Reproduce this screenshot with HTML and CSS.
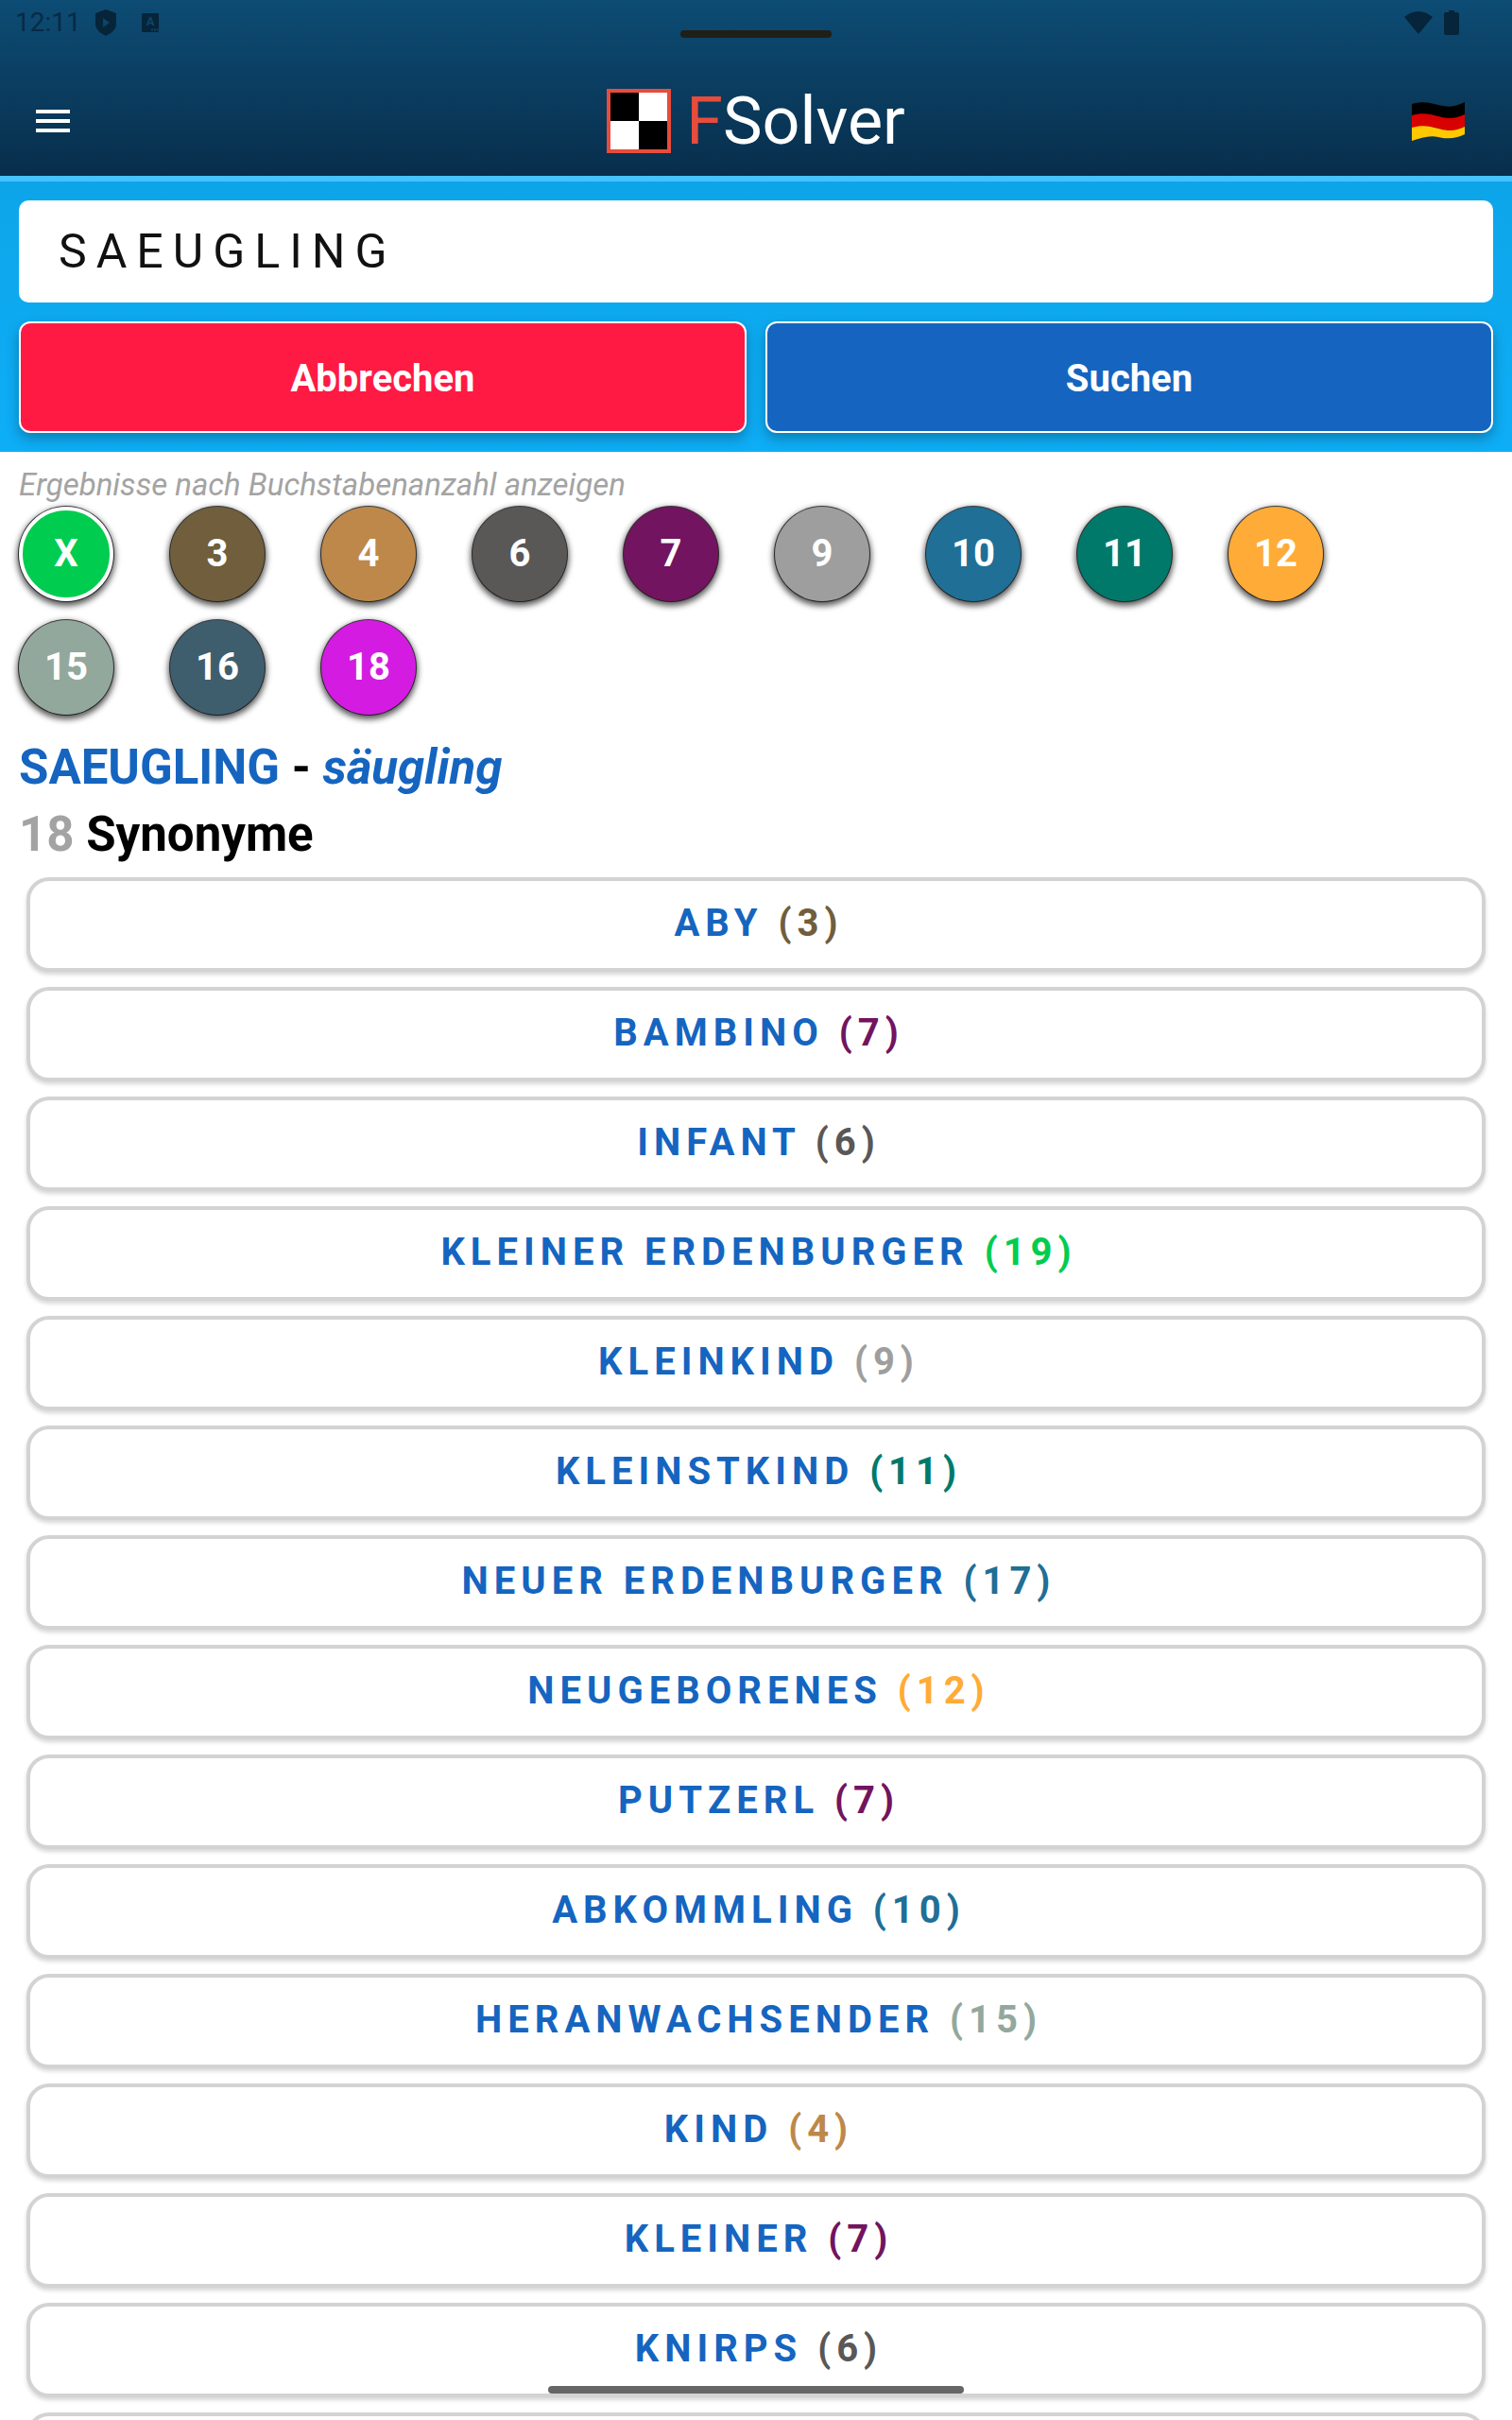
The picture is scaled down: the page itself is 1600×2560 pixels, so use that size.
FILE: index.html
```html
<!DOCTYPE html>
<html>
<head>
    <title>FSolver</title>
    <meta charset="UTF-8">
    <link rel="stylesheet" href="styles.css">
</head>
<body>
    <div class="app">
        <!-- Header with status bar -->
        <header class="app-header">
            <div class="status-bar">
                <div class="status-left">
                    <span class="status-time">12:11</span>
                    <svg class="status-shield" width="22" height="28" viewBox="0 0 22 28"><path d="M11 0 22 4v11c0 6-5 10-11 13C5 25 0 21 0 15V4z" fill="#06243a"/><path d="M8 9l7 5-7 5z" fill="#0d4468"/></svg>
                    <svg class="status-a" width="18" height="20" viewBox="0 0 18 20"><rect width="18" height="20" rx="1" fill="#06243a"/><text x="9" y="13" text-anchor="middle" font-family="Roboto" font-size="13" font-weight="700" fill="#0d4468">A</text><path d="M10 16.5h2v2h-2zM13 16.5h2v2h-2zM16 16.5h1.500v2H16z" fill="#0d4468"/></svg>
                </div>
                <div class="status-right">
                    <svg width="30" height="25" viewBox="0 0 30 25"><path d="M15 25 0 7Q15-5 30 7z" fill="#06243a"/></svg>
                    <svg width="16" height="26" viewBox="0 0 16 26"><path d="M5 0h6v2h3a2 2 0 0 1 2 2v20a2 2 0 0 1-2 2H2a2 2 0 0 1-2-2V4a2 2 0 0 1 2-2h3z" fill="#06243a"/></svg>
                </div>
            </div>
            <div class="toolbar">
                <div class="menu-icon"><span></span><span></span><span></span></div>
                <div class="brand">
                    <div class="brand-logo"><i class="dark"></i><i></i><i></i><i class="dark"></i></div>
                    <div class="brand-name"><span class="brand-f">F</span>Solver</div>
                </div>
                <svg class="flag" width="56" height="41" viewBox="0 0 56 41">
                    <path d="M0 2C10-1 18 0 28 3s18 2 28-3v14c-10 5-18 5-28 2S10 12 0 15z" fill="#000"/>
                    <path d="M0 14c10-3 18-2 28 1s18 3 28-2v13c-10 5-18 5-28 2S10 25 0 28z" fill="#d80000"/>
                    <path d="M0 27c10-3 18-2 28 1s18 3 28-2v8c-10 5-18 5-28 3S10 38 0 41z" fill="#ffc800"/>
                </svg>
            </div>
        </header>

        <!-- Search panel -->
        <section class="search-panel">
            <div class="search-input">SAEUGLING</div>
            <div class="search-actions">
                <button class="btn btn-cancel">Abbrechen</button>
                <button class="btn btn-search">Suchen</button>
            </div>
        </section>

        <!-- Letter count filter -->
        <p class="filter-hint">Ergebnisse nach Buchstabenanzahl anzeigen</p>
        <div class="filter-list">
            <div class="chip chip-active c-19-bg">X</div>
            <div class="chip c-3-bg">3</div>
            <div class="chip c-4-bg">4</div>
            <div class="chip c-6-bg">6</div>
            <div class="chip c-7-bg">7</div>
            <div class="chip c-9-bg">9</div>
            <div class="chip c-10-bg">10</div>
            <div class="chip c-11-bg">11</div>
            <div class="chip c-12-bg">12</div>
            <div class="chip c-15-bg">15</div>
            <div class="chip c-16-bg">16</div>
            <div class="chip c-18-bg">18</div>
        </div>

        <!-- Results -->
        <h2 class="result-title">SAEUGLING <span class="dash">-</span> <em>säugling</em></h2>
        <h2 class="result-count"><span class="count-num">18</span> Synonyme</h2>
        <div class="result-list">
            <button class="word">ABY <span class="c-3">(3)</span></button>
            <button class="word">BAMBINO <span class="c-7">(7)</span></button>
            <button class="word">INFANT <span class="c-6">(6)</span></button>
            <button class="word">KLEINER ERDENBURGER <span class="c-19">(19)</span></button>
            <button class="word">KLEINKIND <span class="c-9">(9)</span></button>
            <button class="word">KLEINSTKIND <span class="c-11">(11)</span></button>
            <button class="word">NEUER ERDENBURGER <span class="c-17">(17)</span></button>
            <button class="word">NEUGEBORENES <span class="c-12">(12)</span></button>
            <button class="word">PUTZERL <span class="c-7">(7)</span></button>
            <button class="word">ABKOMMLING <span class="c-10">(10)</span></button>
            <button class="word">HERANWACHSENDER <span class="c-15">(15)</span></button>
            <button class="word">KIND <span class="c-4">(4)</span></button>
            <button class="word">KLEINER <span class="c-7">(7)</span></button>
            <button class="word">KNIRPS <span class="c-6">(6)</span></button>
            <button class="word"></button>
        </div>

        <!-- System bars on top of the content -->
        <div class="notch-bar"></div>
        <div class="home-pill"></div>
    </div>
</body>
</html>
```

FILE: styles.css
```css
body {
    margin: 0;
    padding: 0;
    background-color: #fff;
    font-family: Roboto, sans-serif;
}
.app {
    width: 1600px;
    height: 2560px;
    overflow: hidden;
    position: relative; /* for the system bars */
}

/* --- Header --- */
.app-header {
    height: 186px;
    background: linear-gradient(#0d4c74, #082e4c);
    border-bottom: 6px solid #44c2ff;
    display: flex;
    flex-direction: column;
}
.status-bar {
    height: 46px;
    padding: 10px 56px 0 16px;
    box-sizing: border-box;
    display: flex;
    justify-content: space-between;
    align-items: flex-start;
}
.status-left {
    display: flex;
    align-items: center;
    gap: 15px;
}
.status-time {
    font-size: 28px;
    line-height: 28px;
    color: #082a44;
}
.status-a { margin-left: 12px; }
.status-right {
    display: flex;
    gap: 12px;
    padding-top: 1px;
}
.toolbar {
    flex-grow: 1;
    padding: 24px 38px 0;
    display: grid;
    grid-template-columns: 1fr auto 1fr;
    align-items: center;
}
.menu-icon {
    width: 36px;
    display: flex;
    flex-direction: column;
    gap: 6px;
}
.menu-icon span {
    height: 4px;
    background-color: #fff;
}
.brand {
    display: flex;
    align-items: center;
    gap: 16px;
}
.brand-logo {
    width: 68px;
    height: 68px;
    box-sizing: border-box;
    border: 4px solid #e74c3c;
    display: grid;
    grid-template-columns: 1fr 1fr;
    grid-template-rows: 1fr 1fr;
}
.brand-logo i { background-color: #fff; }
.brand-logo i.dark { background-color: #000; }
.brand-name {
    font-size: 70px;
    line-height: 68px;
    color: #fff;
}
.brand-f { color: #e74c3c; }
.flag {
    justify-self: end;
    margin-right: 12px;
}

/* --- Search panel --- */
.search-panel {
    height: 286px;
    box-sizing: border-box;
    padding: 20px 20px 0;
    background: linear-gradient(#0da5e9, #0eaef7);
}
.search-input {
    height: 108px;
    box-sizing: border-box;
    padding-left: 42px;
    background-color: #fff;
    border-radius: 10px;
    font-size: 50px;
    line-height: 108px;
    letter-spacing: 10px;
    color: #111;
}
.search-actions {
    margin-top: 20px;
    display: flex;
    gap: 20px;
}
.btn {
    flex: 1;
    height: 118px;
    box-sizing: border-box;
    padding-top: 3px;
    border: 2px solid #fff;
    border-radius: 12px;
    color: #fff;
    font-family: Roboto, sans-serif;
    font-size: 40px;
    font-weight: 700;
    box-shadow: 0 6px 14px rgba(0, 0, 0, .28);
}
.btn-cancel { background-color: #ff1a44; }
.btn-search { background-color: #1565c0; }

/* --- Filter chips --- */
.filter-hint {
    margin: 0;
    padding: 15px 20px 3px;
    font-size: 33px;
    line-height: 40px;
    font-style: italic;
    color: #a3a3a3;
}
.filter-list {
    width: 1500px;
    padding: 0 20px;
    display: flex;
    flex-wrap: wrap;
    gap: 20px 60px;
}
.chip {
    width: 100px;
    height: 100px;
    padding-bottom: 2px;
    border-radius: 50%;
    box-sizing: border-box;
    display: flex;
    align-items: center;
    justify-content: center;
    color: #fff;
    font-size: 40px;
    font-weight: 700;
    box-shadow: 0 0 0 1px rgba(0, 0, 0, .7), 0 3px 6px 2px rgba(0, 0, 0, .65);
}
.chip-active { border: 4px solid #fff; }

/* --- Letter count colours --- */
.c-3 { color: #705e3c; }
.c-4 { color: #bd884a; }
.c-6 { color: #5a5757; }
.c-7 { color: #72145f; }
.c-9 { color: #9e9e9e; }
.c-10 { color: #1f6f97; }
.c-11 { color: #00796b; }
.c-12 { color: #ffab37; }
.c-15 { color: #93a89c; }
.c-16 { color: #3e5e6e; }
.c-17 { color: #1f6f97; }
.c-18 { color: #d41be2; }
.c-19 { color: #00cc50; }
.c-3-bg { background-color: #705e3c; }
.c-4-bg { background-color: #bd884a; }
.c-6-bg { background-color: #5a5757; }
.c-7-bg { background-color: #72145f; }
.c-9-bg { background-color: #9e9e9e; }
.c-10-bg { background-color: #1f6f97; }
.c-11-bg { background-color: #00796b; }
.c-12-bg { background-color: #ffab37; }
.c-15-bg { background-color: #93a89c; }
.c-16-bg { background-color: #3e5e6e; }
.c-18-bg { background-color: #d41be2; }
.c-19-bg { background-color: #00cc50; }

/* --- Results --- */
.result-title, .result-count {
    margin: 0;
    padding: 0 20px;
    font-size: 51px;
    font-weight: 700;
}
.result-title {
    margin-top: 21px;
    line-height: 70px;
    color: #1565c0;
}
.result-title .dash { color: #000; }
.result-count {
    line-height: 72px;
    color: #000;
}
.count-num { color: #a3a3a3; }
.result-list {
    margin-top: 9px;
    padding: 0 28px;
    display: flex;
    flex-direction: column;
    gap: 16px;
}
.word {
    flex-shrink: 0;
    height: 100px;
    box-sizing: border-box;
    padding: 0 6px 3px 12px;
    background-color: #fff;
    border: 4px solid #d3d3d3;
    border-radius: 24px;
    box-shadow: 0 3px 4px rgba(0, 0, 0, .16);
    color: #1565c0;
    font-family: Roboto, sans-serif;
    font-size: 40px;
    font-weight: 700;
    letter-spacing: 6px;
}

/* --- System bars --- */
.notch-bar {
    position: absolute;
    left: 720px;
    top: 32px;
    width: 160px;
    height: 8px;
    border-radius: 4px;
    background-color: #1f1f18;
}
.home-pill {
    position: absolute;
    left: 580px;
    top: 2524px;
    width: 440px;
    height: 8px;
    border-radius: 4px;
    background-color: #666;
}
```
